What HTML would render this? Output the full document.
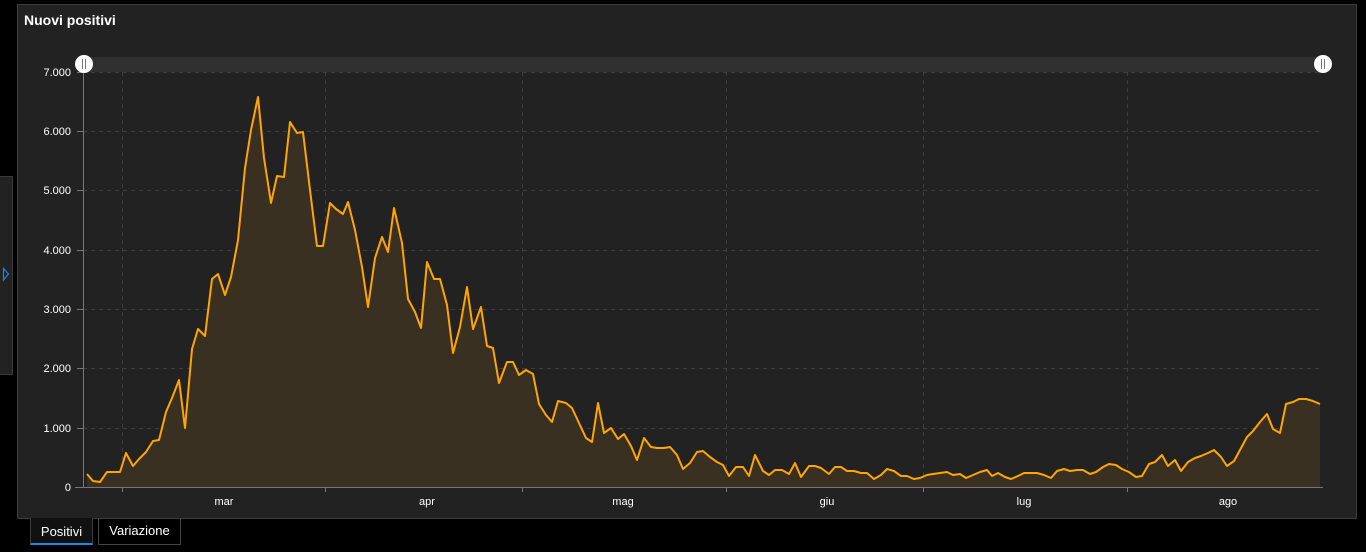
<!DOCTYPE html>
<html><head><meta charset="utf-8"><style>
html,body{margin:0;padding:0;background:#000;width:1366px;height:552px;overflow:hidden;font-family:"Liberation Sans",Arial,sans-serif}
.side{position:absolute;left:0;top:176px;width:13px;height:199px;background:#222;border:1px solid #3a3a3a;border-left:none;box-sizing:border-box}
.panel{position:absolute;left:17px;top:4px;width:1340px;height:515px;background:#222;border:1px solid #3c3c3c;box-sizing:border-box}
.title{position:absolute;left:24px;top:12px;color:#fff;font-weight:bold;font-size:14px}
.tab{position:absolute;top:518px;height:27px;box-sizing:border-box;color:#fff;font-size:13px;line-height:27px;text-align:center}
</style></head><body>
<div class="side"></div>
<svg style="position:absolute;left:0;top:0" width="20" height="300"><polygon points="3.5,268.5 8.5,274 3.5,280" fill="none" stroke="#1e88e5" stroke-width="1.2"/></svg>
<div class="panel"></div>
<div class="title">Nuovi positivi</div>
<svg style="position:absolute;left:0;top:0" width="1366" height="552">
<rect x="83" y="57" width="1240" height="15" fill="#303030"/>
<g stroke="#3e3e3e" stroke-dasharray="4,4" stroke-width="1">
<line x1="83" y1="72.5" x2="1323" y2="72.5"/>
<line x1="83" y1="131.5" x2="1323" y2="131.5"/>
<line x1="83" y1="190.5" x2="1323" y2="190.5"/>
<line x1="83" y1="250.5" x2="1323" y2="250.5"/>
<line x1="83" y1="309.5" x2="1323" y2="309.5"/>
<line x1="83" y1="368.5" x2="1323" y2="368.5"/>
<line x1="83" y1="428.5" x2="1323" y2="428.5"/>
<line x1="122.5" y1="72" x2="122.5" y2="487"/>
<line x1="325.5" y1="72" x2="325.5" y2="487"/>
<line x1="522.5" y1="72" x2="522.5" y2="487"/>
<line x1="726.5" y1="72" x2="726.5" y2="487"/>
<line x1="923.5" y1="72" x2="923.5" y2="487"/>
<line x1="1127.5" y1="72" x2="1127.5" y2="487"/>
</g>
<polygon fill="#3a3022" points="87,487 87,474 93,481 100,482 107,472 113,472 120,472 126,453 133,466 139,459 146,452 153,441 159,440 166,412 172,398 179,380 185,428 192,349 198,329 205,336 212,279 218,274 225,295 231,277 238,240 245,168 251,130 258,97 264,158 271,203 277,176 284,177 290,122 297,133 303,132 310,190 317,246 323,246 330,203 336,209 343,214 348,202 355,230 362,267 368,307 375,258 382,237 388,252 394,208 402,243 408,299 415,312 421,328 427,262 434,279 440,279 447,305 453,353 460,327 467,287 473,329 481,307 487,346 493,348 499,383 507,362 513,362 519,375 526,370 533,374 539,404 546,415 552,422 558,401 566,403 572,408 579,423 586,438 592,442 598,403 604,433 611,428 618,439 624,434 631,446 637,460 644,438 651,447 657,448 664,448 670,447 677,455 683,469 690,463 697,452 703,451 710,457 717,462 723,465 729,476 736,467 743,467 749,476 755,455 763,471 769,475 775,470 782,470 789,474 795,463 801,477 809,466 815,466 821,468 829,474 835,467 841,467 847,471 854,471 861,473 867,473 874,479 881,475 887,469 894,471 901,476 907,476 914,479 920,478 927,475 933,474 940,473 947,472 953,475 960,474 966,478 973,475 980,472 987,470 992,476 998,473 1005,477 1011,479 1018,476 1024,473 1031,473 1037,473 1044,475 1051,478 1057,471 1064,469 1070,471 1077,470 1083,470 1090,474 1096,472 1103,467 1109,464 1116,465 1122,469 1129,472 1136,477 1142,476 1149,464 1155,462 1162,455 1168,466 1175,460 1181,471 1188,462 1195,458 1201,456 1208,453 1214,450 1221,457 1227,466 1234,461 1240,450 1247,437 1253,431 1260,422 1267,414 1273,429 1280,433 1286,404 1293,402 1299,399 1306,399 1313,401 1320,404 1320,487"/>
<polyline fill="none" stroke="#ffa500" stroke-width="2" stroke-linejoin="round" points="87,474 93,481 100,482 107,472 113,472 120,472 126,453 133,466 139,459 146,452 153,441 159,440 166,412 172,398 179,380 185,428 192,349 198,329 205,336 212,279 218,274 225,295 231,277 238,240 245,168 251,130 258,97 264,158 271,203 277,176 284,177 290,122 297,133 303,132 310,190 317,246 323,246 330,203 336,209 343,214 348,202 355,230 362,267 368,307 375,258 382,237 388,252 394,208 402,243 408,299 415,312 421,328 427,262 434,279 440,279 447,305 453,353 460,327 467,287 473,329 481,307 487,346 493,348 499,383 507,362 513,362 519,375 526,370 533,374 539,404 546,415 552,422 558,401 566,403 572,408 579,423 586,438 592,442 598,403 604,433 611,428 618,439 624,434 631,446 637,460 644,438 651,447 657,448 664,448 670,447 677,455 683,469 690,463 697,452 703,451 710,457 717,462 723,465 729,476 736,467 743,467 749,476 755,455 763,471 769,475 775,470 782,470 789,474 795,463 801,477 809,466 815,466 821,468 829,474 835,467 841,467 847,471 854,471 861,473 867,473 874,479 881,475 887,469 894,471 901,476 907,476 914,479 920,478 927,475 933,474 940,473 947,472 953,475 960,474 966,478 973,475 980,472 987,470 992,476 998,473 1005,477 1011,479 1018,476 1024,473 1031,473 1037,473 1044,475 1051,478 1057,471 1064,469 1070,471 1077,470 1083,470 1090,474 1096,472 1103,467 1109,464 1116,465 1122,469 1129,472 1136,477 1142,476 1149,464 1155,462 1162,455 1168,466 1175,460 1181,471 1188,462 1195,458 1201,456 1208,453 1214,450 1221,457 1227,466 1234,461 1240,450 1247,437 1253,431 1260,422 1267,414 1273,429 1280,433 1286,404 1293,402 1299,399 1306,399 1313,401 1320,404"/>
<g stroke="#777" stroke-width="1">
<line x1="83.5" y1="72" x2="83.5" y2="487"/>
<line x1="75" y1="487.5" x2="1323" y2="487.5"/>
<line x1="77" y1="72.5" x2="83" y2="72.5"/><line x1="77" y1="131.5" x2="83" y2="131.5"/><line x1="77" y1="190.5" x2="83" y2="190.5"/><line x1="77" y1="250.5" x2="83" y2="250.5"/><line x1="77" y1="309.5" x2="83" y2="309.5"/><line x1="77" y1="368.5" x2="83" y2="368.5"/><line x1="77" y1="428.5" x2="83" y2="428.5"/>
<line x1="122.5" y1="487" x2="122.5" y2="492"/><line x1="325.5" y1="487" x2="325.5" y2="492"/><line x1="522.5" y1="487" x2="522.5" y2="492"/><line x1="726.5" y1="487" x2="726.5" y2="492"/><line x1="923.5" y1="487" x2="923.5" y2="492"/><line x1="1127.5" y1="487" x2="1127.5" y2="492"/>
</g>
<g fill="#fff" font-size="11" font-family="Liberation Sans,Arial,sans-serif" text-anchor="end">
<text x="71" y="76">7.000</text><text x="71" y="135">6.000</text><text x="71" y="194">5.000</text><text x="71" y="254">4.000</text><text x="71" y="313">3.000</text><text x="71" y="372">2.000</text><text x="71" y="432">1.000</text><text x="71" y="491">0</text>
</g>
<g fill="#fff" font-size="11" font-family="Liberation Sans,Arial,sans-serif" text-anchor="middle">
<text x="224" y="505">mar</text><text x="427" y="505">apr</text><text x="623" y="505">mag</text><text x="827" y="505">giu</text><text x="1024" y="505">lug</text><text x="1228" y="505">ago</text>
</g>
<circle cx="84" cy="64" r="9" fill="#fff"/><line x1="82.5" y1="59" x2="82.5" y2="69" stroke="#777"/><line x1="85.5" y1="59" x2="85.5" y2="69" stroke="#777"/>
<circle cx="1323" cy="64" r="9" fill="#fff"/><line x1="1321.5" y1="59" x2="1321.5" y2="69" stroke="#777"/><line x1="1324.5" y1="59" x2="1324.5" y2="69" stroke="#777"/>
</svg>
<div class="tab" style="left:30px;width:63px;border-left:1px solid #3c3c3c;border-right:1px solid #3c3c3c;border-bottom:2px solid #1e88e5;background:#111">Positivi</div>
<div class="tab" style="left:98px;width:83px;border:1px solid #444;border-top:none;line-height:26px">Variazione</div>
</body></html>
